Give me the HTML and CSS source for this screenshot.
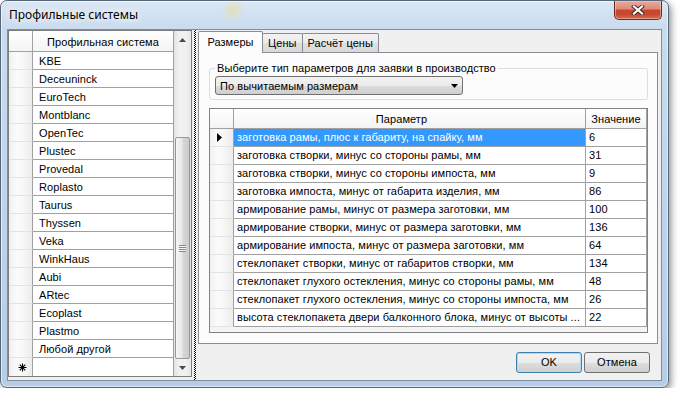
FILE: index.html
```html
<!DOCTYPE html>
<html lang="ru">
<head>
    <meta charset="UTF-8">
    <title>Профильные системы</title>
    <link rel="stylesheet" href="styles.css">
</head>
<body>
<div class="window">
    <!-- заголовок окна -->
    <div class="titlebar">
        <span class="title">Профильные системы</span>
        <div class="close-btn">
            <svg width="14" height="10" viewBox="0 0 14 10">
                <path d="M3 1.5 L11 8.5 M11 1.5 L3 8.5" stroke="#3a2a2a" stroke-width="4" stroke-linecap="square"/>
                <path d="M3 1.5 L11 8.5 M11 1.5 L3 8.5" stroke="#ffffff" stroke-width="2.2" stroke-linecap="square"/>
            </svg>
        </div>
    </div>

    <div class="client">
        <!-- список систем -->
        <div class="left-grid">
            <div class="lg-body">
                <div class="lg-row lg-head">
                    <div class="rh"></div>
                    <div class="cell head">Профильная система</div>
                </div>
                <div class="lg-row"><div class="rh"></div><div class="cell">KBE</div></div>
                <div class="lg-row"><div class="rh"></div><div class="cell">Deceuninck</div></div>
                <div class="lg-row"><div class="rh"></div><div class="cell">EuroTech</div></div>
                <div class="lg-row"><div class="rh"></div><div class="cell">Montblanc</div></div>
                <div class="lg-row"><div class="rh"></div><div class="cell">OpenTec</div></div>
                <div class="lg-row"><div class="rh"></div><div class="cell">Plustec</div></div>
                <div class="lg-row"><div class="rh"></div><div class="cell">Provedal</div></div>
                <div class="lg-row"><div class="rh"></div><div class="cell">Roplasto</div></div>
                <div class="lg-row"><div class="rh"></div><div class="cell">Taurus</div></div>
                <div class="lg-row"><div class="rh"></div><div class="cell">Thyssen</div></div>
                <div class="lg-row"><div class="rh"></div><div class="cell">Veka</div></div>
                <div class="lg-row"><div class="rh"></div><div class="cell">WinkHaus</div></div>
                <div class="lg-row"><div class="rh"></div><div class="cell">Aubi</div></div>
                <div class="lg-row"><div class="rh"></div><div class="cell">ARtec</div></div>
                <div class="lg-row"><div class="rh"></div><div class="cell">Ecoplast</div></div>
                <div class="lg-row"><div class="rh"></div><div class="cell">Plastmo</div></div>
                <div class="lg-row"><div class="rh"></div><div class="cell">Любой другой</div></div>
                <div class="lg-row last">
                    <div class="rh new-row">
                        <svg width="9" height="9" viewBox="0 0 9 9">
                            <path d="M4.5 0.5 V8.5 M0.5 4.5 H8.5 M1.7 1.7 L7.3 7.3 M7.3 1.7 L1.7 7.3" stroke="#000" stroke-width="1.1"/>
                        </svg>
                    </div>
                    <div class="cell"></div>
                </div>
            </div>
            <div class="vscroll">
                <div class="sb-btn">
                    <svg width="7" height="4" viewBox="0 0 7 4"><path d="M0 4 L3.5 0 L7 4 Z" fill="#4a4a4a"/></svg>
                </div>
                <div class="sb-track">
                    <div class="sb-thumb"><span class="grip"></span></div>
                </div>
                <div class="sb-btn">
                    <svg width="7" height="4" viewBox="0 0 7 4"><path d="M0 0 L7 0 L3.5 4 Z" fill="#4a4a4a"/></svg>
                </div>
            </div>
        </div>

        <div class="splitter"><div class="dots"></div></div>

        <!-- вкладки -->
        <div class="right-pane">
            <div class="tabs">
                <div class="tab active">Размеры</div>
                <div class="tab">Цены</div>
                <div class="tab">Расчёт цены</div>
            </div>
            <div class="tab-page">
                <fieldset class="group">
                    <legend>Выберите тип параметров для заявки в производство</legend>
                    <div class="combo">
                        <span>По вычитаемым размерам</span>
                        <svg width="7" height="4" viewBox="0 0 7 4"><path d="M0 0 L7 0 L3.5 4 Z" fill="#000"/></svg>
                    </div>
                </fieldset>

                <div class="param-grid">
                    <div class="pg-row pg-head">
                        <div class="rh"></div>
                        <div class="c-name head name-head">Параметр</div>
                        <div class="c-val head">Значение</div>
                    </div>
                    <div class="pg-row">
                        <div class="rh current">
                            <svg width="5" height="9" viewBox="0 0 5 9"><path d="M0 0 L5 4.5 L0 9 Z" fill="#000"/></svg>
                        </div>
                        <div class="c-name selected">заготовка рамы, плюс к габариту, на спайку, мм</div>
                        <div class="c-val">6</div>
                    </div>
                    <div class="pg-row"><div class="rh"></div><div class="c-name">заготовка створки, минус со стороны рамы, мм</div><div class="c-val">31</div></div>
                    <div class="pg-row"><div class="rh"></div><div class="c-name">заготовка створки, минус со стороны импоста, мм</div><div class="c-val">9</div></div>
                    <div class="pg-row"><div class="rh"></div><div class="c-name">заготовка импоста, минус от габарита изделия, мм</div><div class="c-val">86</div></div>
                    <div class="pg-row"><div class="rh"></div><div class="c-name">армирование рамы, минус от размера заготовки, мм</div><div class="c-val">100</div></div>
                    <div class="pg-row"><div class="rh"></div><div class="c-name">армирование створки, минус от размера заготовки, мм</div><div class="c-val">136</div></div>
                    <div class="pg-row"><div class="rh"></div><div class="c-name">армирование импоста, минус от размера заготовки, мм</div><div class="c-val">64</div></div>
                    <div class="pg-row"><div class="rh"></div><div class="c-name">стеклопакет створки, минус от габаритов створки, мм</div><div class="c-val">134</div></div>
                    <div class="pg-row"><div class="rh"></div><div class="c-name">стеклопакет глухого остекления, минус со стороны рамы, мм</div><div class="c-val">48</div></div>
                    <div class="pg-row"><div class="rh"></div><div class="c-name">стеклопакет глухого остекления, минус со стороны импоста, мм</div><div class="c-val">26</div></div>
                    <div class="pg-row"><div class="rh"></div><div class="c-name">высота стеклопакета двери балконного блока, минус от высоты ...</div><div class="c-val">22</div></div>
                </div>
            </div>
            <div class="buttons">
                <div class="btn default">OK</div>
                <div class="btn">Отмена</div>
            </div>
        </div>
    </div>
</div>
</body>
</html>
```

FILE: styles.css
```css
* {
    box-sizing: border-box;
}
body {
    margin: 0;
    background: #fff;
    font-family: "Liberation Sans", Arial, sans-serif;
    font-size: 11px;
    letter-spacing: 0.07px;
    color: #000;
}
/* окно */
.window {
    width: 669px;
    height: 388px;
    display: flex;
    flex-direction: column;
    padding: 0 6px 6px;
    border: 1px solid #56677a;
    border-radius: 7px;
    background:
        radial-gradient(circle at 232px 9px, rgba(236, 222, 140, 0.55) 0, rgba(236, 222, 140, 0) 12px),
        linear-gradient(180deg, #dbe7f4 0, #c9dbee 28px, #bed3ea 60%, #b7cde6 100%);
    box-shadow: inset 0 0 0 1px rgba(255, 255, 255, 0.55), 2px 3px 7px rgba(0, 0, 0, 0.45);
}
.titlebar {
    height: 28px;
    display: flex;
    justify-content: space-between;
    align-items: flex-start;
}
.title {
    margin: 6px 0 0 2px;
    font-family: "Noto Sans", "Open Sans", sans-serif;
    font-size: 12px;
    line-height: 16px;
    letter-spacing: 0;
    text-shadow: 0 0 6px #fff, 0 0 10px #fff;
}
.close-btn {
    width: 48px;
    height: 19px;
    display: flex;
    justify-content: center;
    align-items: center;
    border: 1px solid #6b2a22;
    border-top: none;
    border-radius: 0 0 5px 5px;
    background: linear-gradient(180deg, #e9a99b 0, #dc8a77 45%, #c8462e 50%, #c74a31 75%, #d86a4c 100%);
    box-shadow: inset 0 0 0 1px rgba(255, 210, 200, 0.5);
}
.client {
    flex: 1;
    display: flex;
    align-items: flex-start;
    border: 1px solid #7d8ea2;
    background: #f0f0f0;
}

/* левая таблица */
.left-grid {
    width: 184px;
    display: flex;
    border: 1px solid #7e7e7e;
    background: #fff;
}
.lg-body {
    width: 165px;
    display: flex;
    flex-direction: column;
}
.lg-row {
    display: flex;
    height: 18px;
}
.lg-row.lg-head {
    height: 21px;
}
.rh {
    width: 24px;
    flex: none;
    border-right: 1px solid #a0a0a0;
    border-bottom: 1px solid #e3e3e3;
    background: linear-gradient(90deg, #f1f1f1 0, #fbfbfb 35%, #f7f7f7 60%, #ececec 100%);
}
.lg-head .rh,
.pg-head .rh {
    border-bottom: 1px solid #a0a0a0;
    background: linear-gradient(180deg, #ffffff 0, #f3f4f6 100%);
}
.cell {
    width: 141px;
    padding: 3px 0 0 6px;
    line-height: 13px;
    border-right: 1px solid #a0a0a0;
    border-bottom: 1px solid #a0a0a0;
    white-space: nowrap;
}
.lg-row.last .cell,
.lg-row.last .rh {
    border-bottom: none;
}
.cell.head {
    padding: 5px 0 0 0;
    text-align: center;
    background: linear-gradient(180deg, #ffffff 0, #f3f4f6 100%);
}
.new-row {
    display: flex;
    align-items: center;
    padding-left: 9px;
}
.vscroll {
    width: 17px;
    display: flex;
    flex-direction: column;
    background: linear-gradient(90deg, #e3e3e3 0, #f1f1f1 30%, #f1f1f1 70%, #e6e6e6 100%);
}
.sb-btn {
    height: 17px;
    display: flex;
    justify-content: center;
    align-items: center;
}
.sb-track {
    flex: 1;
    display: flex;
    flex-direction: column;
    justify-content: flex-end;
}
.sb-thumb {
    height: 222px;
    margin: 0 1px;
    display: flex;
    justify-content: center;
    align-items: center;
    border: 1px solid #979797;
    border-radius: 2px;
    background: linear-gradient(90deg, #f6f6f6 0, #e8e8e8 45%, #d6d6d6 55%, #cbcbcb 100%);
}
.grip {
    width: 7px;
    height: 7px;
    background: repeating-linear-gradient(180deg, #8a8a8a 0 1px, #f4f4f4 1px 2px);
}
.splitter {
    width: 6px;
    align-self: stretch;
    display: flex;
    justify-content: center;
}
.dots {
    width: 2px;
    background: repeating-conic-gradient(#000 0 25%, #fff 0 50%) 0 0 / 2px 2px;
}

/* правая часть */
.right-pane {
    width: 463px;
    align-self: stretch;
    display: flex;
    flex-direction: column;
    padding-top: 1px;
}
.tabs {
    height: 21px;
    display: flex;
    align-items: flex-end;
}
.tab {
    height: 19px;
    padding: 3px 5px 0;
    line-height: 13px;
    margin-left: -1px;
    border: 1px solid #898c95;
    border-bottom: none;
    border-radius: 2px 2px 0 0;
    background: linear-gradient(180deg, #f3f3f3 0, #ebebeb 50%, #dedede 51%, #d9d9d9 100%);
    white-space: nowrap;
}
.tab.active {
    height: 22px;
    width: 65px;
    margin-left: 0;
    margin-bottom: -1px;
    padding: 4px 0 0;
    text-align: center;
    position: relative;
    z-index: 1;
    background: #fcfcfc;
}
.tab-page {
    width: 460px;
    height: 292px;
    padding: 0 9px 0 10px;
    border: 1px solid #898c95;
    background: #fcfcfc;
}
.group {
    margin: 9px 0 0;
    padding: 1px 5px 4px;
    min-width: 0;
    border: 1px solid #d5dfe5;
    border-radius: 3px;
}
.group legend {
    padding: 0 2px;
    line-height: 13px;
}
.combo {
    width: 248px;
    height: 19px;
    display: flex;
    justify-content: space-between;
    align-items: center;
    padding: 0 4px 0 4px;
    border: 1px solid #707070;
    border-radius: 3px;
    background: linear-gradient(180deg, #f2f2f2 0, #ebebeb 50%, #dddddd 51%, #cfcfcf 100%);
}
.param-grid {
    margin-top: 8px;
    height: 225px;
    border: 1px solid #828282;
    background: #f4f4f4;
}
.pg-row {
    display: flex;
    height: 18px;
    background: #fff;
}
.pg-row.pg-head {
    height: 20px;
}
.c-name,
.c-val {
    padding: 2px 0 0 3px;
    line-height: 13px;
    border-right: 1px solid #a0a0a0;
    border-bottom: 1px solid #a0a0a0;
    white-space: nowrap;
    overflow: hidden;
    text-overflow: ellipsis;
}
.c-name {
    width: 352px;
}
.c-val {
    width: 61px;
}
.pg-head .c-name,
.pg-head .c-val {
    padding: 4px 0 0;
    text-align: center;
    background: linear-gradient(180deg, #ffffff 0, #f3f4f6 100%);
}
.pg-head .name-head {
    padding-right: 16px;
}
.c-name.selected {
    background: #3399ff;
    color: #fff;
}
.rh.current {
    display: flex;
    align-items: center;
    padding-left: 7px;
}
.buttons {
    display: flex;
    justify-content: flex-end;
    gap: 2px;
    margin-top: 8px;
    padding-right: 11px;
}
.btn {
    width: 66px;
    height: 21px;
    line-height: 19px;
    text-align: center;
    border: 1px solid #707070;
    border-radius: 3px;
    background: linear-gradient(180deg, #f2f2f2 0, #ebebeb 50%, #dddddd 51%, #cfcfcf 100%);
}
.btn.default {
    border-color: #3c7fb1;
    box-shadow: inset 0 0 0 1px #a8dcf7;
}
```
